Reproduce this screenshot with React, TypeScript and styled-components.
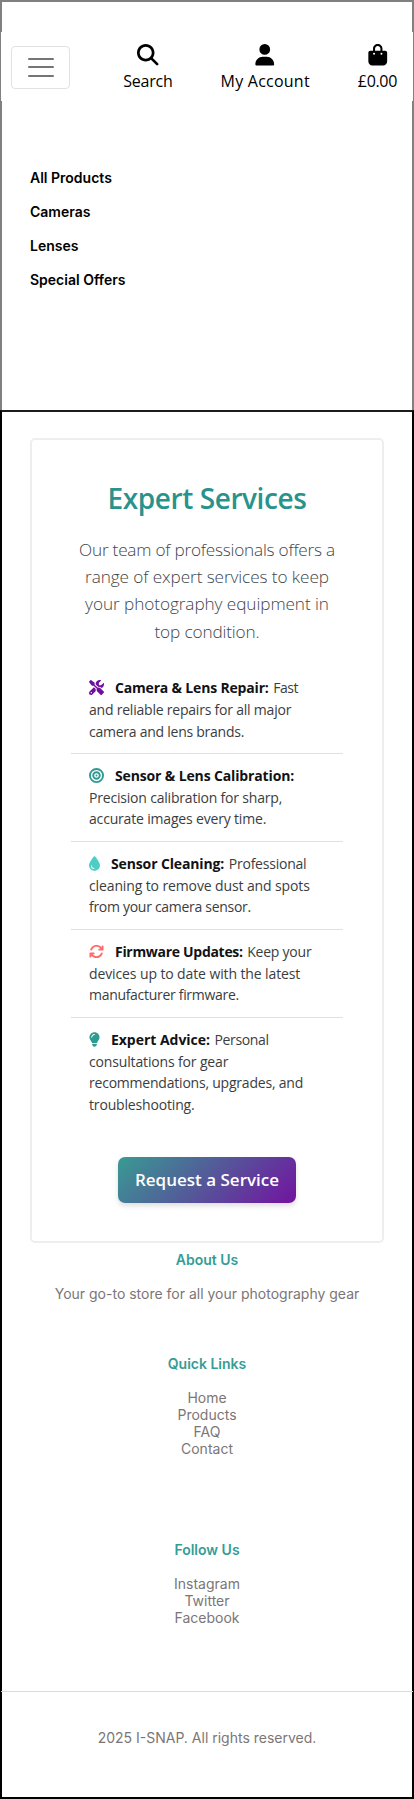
import React from "react";
import styled, { createGlobalStyle } from "styled-components";
import type { IconType } from "react-icons";
import {
  FaMagnifyingGlass,
  FaUser,
  FaBagShopping,
  FaScrewdriverWrench,
  FaBullseye,
  FaDroplet,
  FaArrowsRotate,
  FaLightbulb,
} from "react-icons/fa6";

const GlobalStyle = createGlobalStyle`
  *, *::before, *::after { box-sizing: border-box; }
  body { margin: 0; background: #fff; }
  ul, p, h2, h3 { margin: 0; padding: 0; list-style: none; }
`;

const ui = `"Open Sans", "Noto Sans", sans-serif`;
const inter = `Inter, "Liberation Sans", sans-serif`;

const Page = styled.div`
  display: flex;
  flex-direction: column;
  width: 414px;
  height: 1799px;
  background: #fff;
`;

const Header = styled.header`
  height: 410px;
  border: 2px solid #808080;
  border-bottom: 0;
`;

const Navbar = styled.div`
  display: flex;
  align-items: center;
  height: 69px;
  margin: 30px -1px 0;
  padding: 0 16px 0 10px;
  background: #fff;
`;

const Toggler = styled.button`
  display: flex;
  flex-direction: column;
  align-items: center;
  justify-content: center;
  gap: 6.5px;
  width: 59px;
  height: 43px;
  margin-top: 1px;
  padding: 0;
  background: #fff;
  border: 1px solid #e2e2e2;
  border-radius: 4px;
`;

const Bar = styled.span`
  width: 26px;
  height: 2px;
  border-radius: 1px;
  background: #757575;
`;

const Actions = styled.nav`
  display: flex;
  gap: 48px;
  margin: 3px 0 0 auto;
`;

const Action = styled.a<{ $track: number }>`
  display: flex;
  flex-direction: column;
  align-items: center;
  gap: 4px;
  color: #000;
  font: 400 16px/22px ${ui};
  letter-spacing: ${(p) => p.$track}px;
  white-space: nowrap;
`;

const Menu = styled.ul`
  padding: 60px 0 0 28px;
  font: 600 14px/34px ${inter};
  color: #000;
`;

const Main = styled.main`
  display: flex;
  flex-direction: column;
  flex: 1;
  border: 2px solid #000;
  border-top-color: #1c1c1c;
`;

const Card = styled.section`
  display: flex;
  flex-direction: column;
  align-items: center;
  width: 354px;
  height: 805px;
  margin: 26px 0 0 28px;
  padding-top: 38px;
  border: 2px solid #eeeeee;
  border-radius: 5px;
`;

const Title = styled.h2`
  font: 600 28px/40px ${ui};
  letter-spacing: -0.414px;
  color: #28938c;
`;

const Lead = styled.p`
  margin-top: 18px;
  font: 300 17.2px/27.2px ${ui};
  color: #41464b;
  text-align: center;
`;

const Line = styled.span<{ $track?: number }>`
  display: block;
  letter-spacing: ${(p) => p.$track ?? 0}px;
  white-space: nowrap;
`;

const Services = styled.ul`
  width: 272px;
  margin-top: 21.3px;
`;

const Service = styled.li`
  padding: 10.8px 18px;
  font: 400 14px/21.8px ${ui};
  color: #3a3d40;

  & + & {
    border-top: 1px solid #e0e0e0;
  }
`;

const Name = styled.strong<{ $track: number }>`
  margin-right: 4.5px;
  font-weight: 700;
  letter-spacing: ${(p) => p.$track}px;
  color: #101214;
`;

const Glyph = styled.span<{ $color: string; $width: number }>`
  display: inline-flex;
  width: ${(p) => p.$width}px;
  margin-right: 11px;
  vertical-align: -2px;
  color: ${(p) => p.$color};

  svg {
    flex: none;
    width: 100%;
  }
`;

const Request = styled.button`
  width: 178px;
  height: 46px;
  margin-top: 30.5px;
  padding: 0 0 1px;
  border: 0;
  border-radius: 7px;
  background: linear-gradient(135deg, #389b93 0%, #7213a0 100%);
  box-shadow: 0 3px 5px rgba(0, 0, 0, 0.13);
  font: 600 17px/24px ${ui};
  color: #fff;
`;

const Footer = styled.footer`
  display: flex;
  flex: 1;
  flex-direction: column;
  align-items: center;
  padding-top: 8px;
  font: 400 14px/17px ${inter};
  color: #7b7676;
  text-align: center;
`;

const Block = styled.section<{ $height: number }>`
  height: ${(p) => p.$height}px;
`;

const Heading = styled.h3`
  margin-bottom: 17px;
  font: 600 14px/17px ${inter};
  color: #359d95;
`;

const Copyright = styled.p`
  align-self: stretch;
  margin: 0 -1px;
  padding-top: 37px;
  border-top: 1px solid #d9d9d9;
`;

type Text = [string, number];

const lead: Text[] = [
  ["Our team of professionals offers a", -0.22],
  ["range of expert services to keep", -0.093],
  ["your photography equipment in", -0.076],
  ["top condition.", -0.145],
];

interface ServiceData {
  icon: IconType;
  color: string;
  width: number;
  name: Text;
  first?: Text;
  rest: Text[];
}

const services: ServiceData[] = [
  {
    icon: FaScrewdriverWrench,
    color: "#6d109d",
    width: 15,
    name: ["Camera & Lens Repair:", -0.18],
    first: ["Fast", -0.4],
    rest: [
      ["and reliable repairs for all major", -0.215],
      ["camera and lens brands.", -0.25],
    ],
  },
  {
    icon: FaBullseye,
    color: "#2f9a92",
    width: 15,
    name: ["Sensor & Lens Calibration:", -0.14],
    rest: [
      ["Precision calibration for sharp,", -0.195],
      ["accurate images every time.", -0.176],
    ],
  },
  {
    icon: FaDroplet,
    color: "#4ecdc4",
    width: 11,
    name: ["Sensor Cleaning:", -0.13],
    first: ["Professional", -0.224],
    rest: [
      ["cleaning to remove dust and spots", -0.12],
      ["from your camera sensor.", -0.29],
    ],
  },
  {
    icon: FaArrowsRotate,
    color: "#ff6b6b",
    width: 15,
    name: ["Firmware Updates:", -0.3],
    first: ["Keep your", -0.231],
    rest: [
      ["devices up to date with the latest", -0.111],
      ["manufacturer firmware.", -0.3],
    ],
  },
  {
    icon: FaLightbulb,
    color: "#2f9a92",
    width: 11,
    name: ["Expert Advice:", -0.03],
    first: ["Personal", -0.352],
    rest: [
      ["consultations for gear", -0.15],
      ["recommendations, upgrades, and", -0.214],
      ["troubleshooting.", -0.166],
    ],
  },
];

export default function App() {
  return (
    <>
      <GlobalStyle />
      <Page>
        <Header>
          <Navbar>
            <Toggler aria-label="Menu">
              <Bar />
              <Bar />
              <Bar />
            </Toggler>
            <Actions>
              <Action $track={-0.237}>
                <FaMagnifyingGlass size={21.5} />
                Search
              </Action>
              <Action $track={0.231}>
                <FaUser size={21.5} />
                My Account
              </Action>
              <Action $track={-0.329}>
                <FaBagShopping size={21.5} />
                £0.00
              </Action>
            </Actions>
          </Navbar>
          <Menu>
            <li>All Products</li>
            <li>Cameras</li>
            <li>Lenses</li>
            <li>Special Offers</li>
          </Menu>
        </Header>
        <Main>
          <Card>
            <Title>Expert Services</Title>
            <Lead>
              {lead.map(([text, track]) => (
                <Line key={text} $track={track}>{text}</Line>
              ))}
            </Lead>
            <Services>
              {services.map(({ icon: Icon, color, width, name, first, rest }) => (
                <Service key={name[0]}>
                  <Line $track={first?.[1]}>
                    <Glyph $color={color} $width={width}>
                      <Icon size={15} />
                    </Glyph>
                    <Name $track={name[1]}>{name[0]}</Name>
                    {first?.[0]}
                  </Line>
                  {rest.map(([text, track]) => (
                    <Line key={text} $track={track}>{text}</Line>
                  ))}
                </Service>
              ))}
            </Services>
            <Request>Request a Service</Request>
          </Card>
          <Footer>
            <Block $height={104}>
              <Heading>About Us</Heading>
              <p>Your go-to store for all your photography gear</p>
            </Block>
            <Block $height={186}>
              <Heading>Quick Links</Heading>
              <p>Home</p>
              <p>Products</p>
              <p>FAQ</p>
              <p>Contact</p>
            </Block>
            <Block $height={150}>
              <Heading>Follow Us</Heading>
              <p>Instagram</p>
              <p>Twitter</p>
              <p>Facebook</p>
            </Block>
            <Copyright>2025 I-SNAP. All rights reserved.</Copyright>
          </Footer>
        </Main>
      </Page>
    </>
  );
}
